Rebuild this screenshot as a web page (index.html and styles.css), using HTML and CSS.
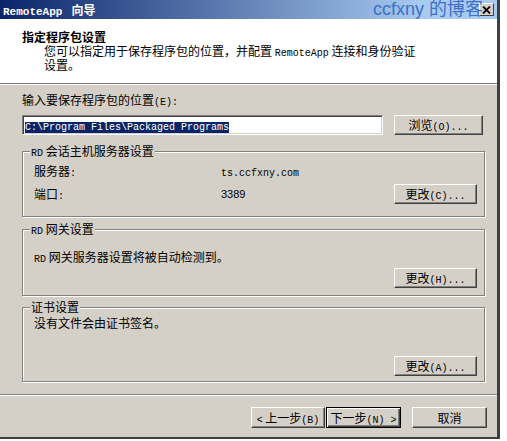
FILE: index.html
```html
<!DOCTYPE html>
<html lang="zh-CN">
<head>
    <meta charset="UTF-8">
    <meta name="viewport" content="width=device-width, initial-scale=1.0">
    <title>RemoteApp 向导</title>
    <link rel="stylesheet" href="styles.css">
</head>
<body>
    <div class="window">
        <div class="titlebar">
            <span class="title"><span class="title-en">RemoteApp</span><span class="title-zh">向导</span></span>
            <span class="close-btn">
                <svg width="9" height="8" viewBox="0 0 9 8"><path d="M1 0.5 L8 7.5 M8 0.5 L1 7.5" stroke="#000" stroke-width="1.8"/></svg>
            </span>
            <span class="watermark">ccfxny 的博客</span>
        </div>

        <div class="header">
            <h1>指定程序包设置</h1>
            <p class="subtitle">您可以指定用于保存程序包的位置，并配置 <span class="en">RemoteApp</span> 连接和身份验证<br>设置。</p>
        </div>

        <div class="content">
            <div class="field-label">输入要保存程序包的位置<span class="en">(E):</span></div>
            <div class="path-row">
                <div class="textbox"><span class="en selected">C:\Program Files\Packaged Programs</span></div>
                <button class="btn btn-browse">浏览<span class="en">(O)...</span></button>
            </div>

            <fieldset class="group group-session">
                <legend><span class="en">RD</span> 会话主机服务器设置</legend>
                <div class="row row-server">
                    <span class="key">服务器<span class="en">:</span></span>
                    <span class="val"><span class="en">ts.ccfxny.com</span></span>
                </div>
                <div class="row row-port">
                    <span class="key">端口<span class="en">:</span></span>
                    <span class="val num">3389</span>
                    <button class="btn btn-change">更改<span class="en">(C)...</span></button>
                </div>
            </fieldset>

            <fieldset class="group group-gateway">
                <legend><span class="en">RD</span> 网关设置</legend>
                <div class="row row-note"><span><span class="en">RD</span> 网关服务器设置将被自动检测到。</span></div>
                <div class="row row-action">
                    <button class="btn btn-change">更改<span class="en">(H)...</span></button>
                </div>
            </fieldset>

            <fieldset class="group group-cert">
                <legend>证书设置</legend>
                <div class="row row-cert-note">没有文件会由证书签名。</div>
                <div class="row row-cert-action">
                    <button class="btn btn-change">更改<span class="en">(A)...</span></button>
                </div>
            </fieldset>
        </div>

        <div class="footer">
            <button class="btn btn-nav btn-back"><span class="en">&lt;</span> 上一步<span class="en">(B)</span></button>
            <button class="btn btn-nav btn-default">下一步<span class="en">(N) &gt;</span></button>
            <button class="btn btn-nav btn-cancel">取消</button>
        </div>
    </div>
</body>
</html>
```

FILE: styles.css
```css
body {
    margin: 0;
    background: #fff;
    font-family: "Noto Sans CJK SC", sans-serif;
    font-size: 12px;
    color: #000;
}
.en {
    font-family: "Liberation Mono", monospace;
    font-size: 10px;
    line-height: 0;
}
.window {
    width: 497px;
    height: 437px;
    overflow: hidden;
    background: #d4d0c8;
    border-right: 3px solid #404040;
    border-bottom: 2px solid #404040;
}
.titlebar {
    position: relative;
    display: flex;
    align-items: center;
    height: 19px;
    background: linear-gradient(to right, #0a246a 0%, #a6caf0 85%);
}
.title {
    color: #fff;
    font-weight: bold;
    padding-left: 3px;
    line-height: 19px;
}
.title-en {
    font-family: "Liberation Mono", monospace;
    font-size: 11px;
    line-height: 0;
}
.title-zh {
    margin-left: 9px;
    font-size: 12px;
}
.close-btn {
    display: flex;
    align-items: center;
    justify-content: center;
    width: 15px;
    height: 13px;
    margin-left: auto;
    margin-right: 3px;
    box-sizing: border-box;
    background: #d4d0c8;
    border: 1px solid;
    border-color: #fff #404040 #404040 #fff;
}
.watermark {
    position: absolute;
    left: 373px;
    top: 0;
    font-family: "Liberation Sans", "Noto Sans CJK SC", sans-serif;
    font-size: 18px;
    line-height: 19px;
    color: #3f6fc6;
}
.header {
    height: 64px;
    background: #fff;
    border-bottom: 1px solid #808080;
}
.header h1 {
    margin: 0;
    padding: 11px 0 0 22px;
    font-size: 12px;
    line-height: 14px;
    font-weight: bold;
}
.subtitle {
    margin: 0 0 0 44px;
    line-height: 14px;
}
.content {
    border-top: 1px solid #fff;
    padding: 0 12px 0 22px;
}
.field-label {
    margin-top: 8px;
    line-height: 14px;
}
.path-row {
    display: flex;
    margin-top: 8px;
}
.textbox {
    width: 361px;
    height: 20px;
    box-sizing: border-box;
    background: #fff;
    border: 1px solid;
    border-color: #808080 #fff #fff #808080;
    box-shadow: inset 1px 1px 0 #404040, inset -1px -1px 0 #d4d0c8;
    padding: 2px 0 0 2px;
    line-height: 14px;
}
.selected {
    background: #0a246a;
    color: #fff;
    line-height: 12px;
}
.btn {
    height: 20px;
    padding: 0;
    box-sizing: border-box;
    background: #d4d0c8;
    border: 1px solid;
    border-color: #fff #404040 #404040 #fff;
    box-shadow: inset -1px -1px 0 #808080;
    font-family: "Noto Sans CJK SC", sans-serif;
    font-size: 12px;
    line-height: 16px;
    color: #000;
}
.btn-browse {
    width: 89px;
    margin-left: 11px;
}
.btn-change {
    width: 83px;
    margin-left: auto;
}
.group {
    margin: 0;
    padding: 0 7px 12px 6px;
    border: 1px solid #808080;
    box-shadow: inset 1px 1px 0 #fff, 1px 1px 0 #fff;
    min-width: 0;
}
.group legend {
    margin-left: 1px;
    padding: 0 1px;
    height: 14px;
    line-height: 14px;
    background: #d4d0c8;
}
.group-session {
    margin-top: 9px;
}
.group-gateway {
    margin-top: 5px;
    padding-bottom: 7px;
}
.group-cert {
    margin-top: 4px;
    padding-bottom: 5px;
}
.row {
    display: flex;
    align-items: center;
    height: 14px;
    padding-left: 5px;
    line-height: 14px;
}
.key {
    width: 187px;
}
.num {
    font-family: "Liberation Sans", sans-serif;
    font-size: 11px;
}
.row-server {
    margin-top: 6px;
}
.row-port {
    margin-top: 6px;
    height: 20px;
}
.row-note {
    margin-top: 14px;
}
.row-action {
    margin-top: 4px;
    height: 20px;
}
.row-cert-note {
    margin-top: 2px;
}
.row-cert-action {
    margin-top: 26px;
    height: 20px;
}
.footer {
    display: flex;
    justify-content: flex-end;
    margin-top: 12px;
    padding: 12px 10px 0 0;
    border-top: 1px solid #808080;
    box-shadow: inset 0 1px 0 #fff;
}
.btn-nav {
    width: 74px;
    height: 21px;
}
.btn-back {
    margin-right: 1px;
}
.btn-default {
    width: 75px;
    border: 1px solid #000;
    box-shadow: inset 1px 1px 0 #fff, inset -1px -1px 0 #404040, inset -2px -2px 0 #808080;
}
.btn-cancel {
    width: 75px;
    margin-left: 11px;
}
```
